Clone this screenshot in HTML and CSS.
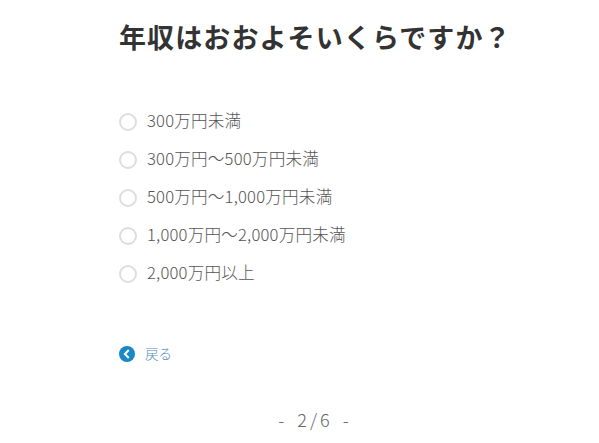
FILE: index.html
```html
<!DOCTYPE html>
<html lang="ja">
<head>
<meta charset="utf-8">
<title>年収</title>
<link rel="stylesheet" href="styles.css">
</head>
<body>
<main class="page">
  <h1 class="title">年収はおおよそいくらですか？</h1>
  <ul class="options">
    <li class="option"><span class="radio"></span><span class="label">300万円未満</span></li>
    <li class="option"><span class="radio"></span><span class="label">300万円～500万円未満</span></li>
    <li class="option"><span class="radio"></span><span class="label">500万円～1,000万円未満</span></li>
    <li class="option"><span class="radio"></span><span class="label">1,000万円～2,000万円未満</span></li>
    <li class="option"><span class="radio"></span><span class="label">2,000万円以上</span></li>
  </ul>
  <a class="back" href="#">
    <svg class="back-icon" viewBox="0 0 16 16" width="16" height="16" aria-hidden="true"><circle cx="8" cy="8" r="8" fill="#1a87c6"/><path d="M9.8 4 5.9 8l3.9 4" fill="none" stroke="#fff" stroke-width="2"/></svg>
    <span class="back-label">戻る</span>
  </a>
  <p class="pager">- 2/6 -</p>
</main>
</body>
</html>
```

FILE: styles.css
```css
* { box-sizing: border-box; }
html, body { margin: 0; padding: 0; background: #fff; }
body {
  height: 443px;
  overflow: hidden;
  font-family: "Noto Sans CJK JP", "Noto Sans", sans-serif;
}
.page {
  width: 599px;
  padding: 0 0 0 119px;
}
.title {
  margin: 0;
  padding-top: 18px;
  height: 110px;
  font-size: 27px;
  line-height: 38px;
  font-weight: 700;
  letter-spacing: 1.1px;
  color: #333;
  white-space: nowrap;
}
.options {
  list-style: none;
  margin: 0;
  padding: 0;
  display: flex;
  flex-direction: column;
  gap: 14px;
}
.option {
  display: flex;
  align-items: center;
  gap: 10px;
  height: 24px;
  font-size: 16.6px;
  font-weight: 300;
  letter-spacing: 0.2px;
  line-height: 24px;
  color: #555;
  white-space: nowrap;
}
.label { margin-top: -4px; }
.radio {
  width: 18px;
  height: 18px;
  border: 2px solid #ddd;
  border-radius: 50%;
  background: #fff;
  flex: none;
}
.back {
  display: flex;
  align-items: center;
  gap: 10px;
  margin-top: 58px;
  height: 20px;
  font-size: 13.5px;
  font-weight: 300;
  color: #4f8bb6;
  text-decoration: none;
}
.back-label { margin-top: -3px; }
.back-icon { flex: none; }
.pager {
  margin: 43px 0 0 -119px;
  width: 599px;
  padding-left: 31px;
  text-align: center;
  font-size: 18px;
  font-weight: 300;
  line-height: 24px;
  letter-spacing: 3px;
  word-spacing: 3px;
  color: #666;
}
```
